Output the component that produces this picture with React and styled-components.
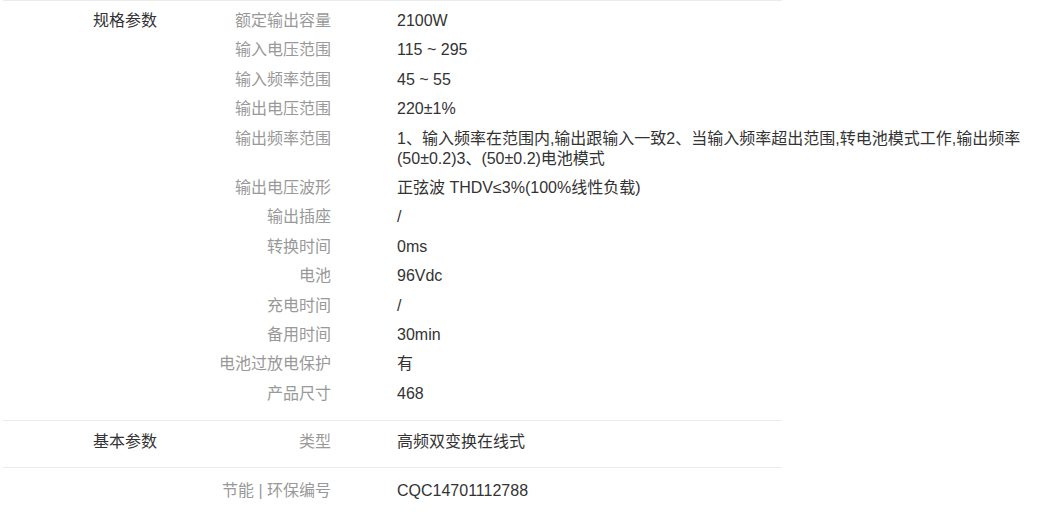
import React from "react";
import styled, { createGlobalStyle } from "styled-components";

const GlobalStyle = createGlobalStyle`
  html, body {
    margin: 0;
    padding: 0;
    background: #fff;
  }
  body {
    font-family: "Liberation Sans", "Noto Sans CJK SC", sans-serif;
    font-size: 16px;
    color: #333;
  }
`;

const Table = styled.div`
  width: 100%;
`;

const Section = styled.div`
  position: relative;
  display: flex;
  padding: ${(p) => p.$padTop}px 0 ${(p) => p.$padBottom}px;
  border-top: 1px solid transparent;

  &::before {
    content: "";
    position: absolute;
    top: -1px;
    left: 3px;
    width: 779px;
    height: 1px;
    background: #ebebeb;
  }
`;

const GroupName = styled.div`
  flex: 0 0 200px;
  box-sizing: border-box;
  padding: 5px 0 0 93px;
  line-height: 20px;
  color: #333;
`;

const Rows = styled.div`
  flex: 1;
  display: flex;
  flex-direction: column;
`;

const Row = styled.div`
  display: flex;
  padding: 5px 0 4.4px;
  line-height: 20px;
`;

const Label = styled.div`
  flex: 0 0 131px;
  text-align: right;
  color: #999;
  white-space: nowrap;
`;

const Value = styled.div`
  flex: 1;
  margin-left: 66px;
  color: #333;
`;

const specs = [
  {
    group: "规格参数",
    padTop: 5,
    padBottom: 12,
    items: [
      ["额定输出容量", "2100W"],
      ["输入电压范围", "115 ~ 295"],
      ["输入频率范围", "45 ~ 55"],
      ["输出电压范围", "220±1%"],
      [
        "输出频率范围",
        "1、输入频率在范围内,输出跟输入一致2、当输入频率超出范围,转电池模式工作,输出频率(50±0.2)3、(50±0.2)电池模式",
      ],
      ["输出电压波形", "正弦波 THDV≤3%(100%线性负载)"],
      ["输出插座", "/"],
      ["转换时间", "0ms"],
      ["电池", "96Vdc"],
      ["充电时间", "/"],
      ["备用时间", "30min"],
      ["电池过放电保护", "有"],
      ["产品尺寸", "468"],
    ],
  },
  {
    group: "基本参数",
    padTop: 6,
    padBottom: 11,
    items: [["类型", "高频双变换在线式"]],
  },
  {
    group: "",
    padTop: 8,
    padBottom: 11,
    items: [["节能 | 环保编号", "CQC14701112788"]],
  },
];

export default function App() {
  return (
    <>
      <GlobalStyle />
      <Table>
        {specs.map((section, i) => (
          <Section key={i} $padTop={section.padTop} $padBottom={section.padBottom}>
            <GroupName>{section.group}</GroupName>
            <Rows>
              {section.items.map(([label, value]) => (
                <Row key={label}>
                  <Label>{label}</Label>
                  <Value>{value}</Value>
                </Row>
              ))}
            </Rows>
          </Section>
        ))}
      </Table>
    </>
  );
}
